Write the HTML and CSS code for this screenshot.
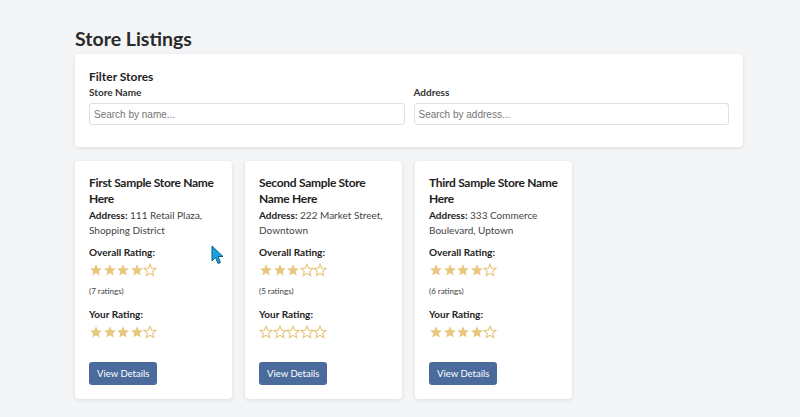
FILE: index.html
```html
<!DOCTYPE html>
<html lang="en">
<head>
<meta charset="utf-8">
<title>Store Listings</title>
<link rel="stylesheet" href="styles.css">
</head>
<body>
<svg class="defs" width="0" height="0" aria-hidden="true">
  <defs>
    <symbol id="star" viewBox="0 0 24 24"><path d="M12 2.2l2.95 6.6 7.2.7-5.45 4.85 1.6 7.05L12 17.7l-6.3 3.7 1.6-7.050L1.85 9.5l7.2-.7z"/></symbol>
  </defs>
</svg>
<div class="page">
  <h1 class="title">Store Listings</h1>
  <section class="filter">
    <h2 class="filter-title">Filter Stores</h2>
    <div class="filter-grid">
      <div class="field">
        <label class="label">Store Name</label>
        <input class="input" type="text" placeholder="Search by name...">
      </div>
      <div class="field">
        <label class="label">Address</label>
        <input class="input" type="text" placeholder="Search by address...">
      </div>
    </div>
  </section>
  <div class="cards">
    <article class="card">
      <h3 class="card-title">First Sample Store Name Here</h3>
      <p class="addr"><b>Address:</b> 111 Retail Plaza, Shopping District</p>
      <div class="rlabel">Overall Rating:</div>
      <div class="stars">
        <svg class="star full"><use href="#star"/></svg><svg class="star full"><use href="#star"/></svg><svg class="star full"><use href="#star"/></svg><svg class="star full"><use href="#star"/></svg><svg class="star empty"><use href="#star"/></svg>
      </div>
      <div class="count">(7 ratings)</div>
      <div class="rlabel">Your Rating:</div>
      <div class="stars">
        <svg class="star full"><use href="#star"/></svg><svg class="star full"><use href="#star"/></svg><svg class="star full"><use href="#star"/></svg><svg class="star full"><use href="#star"/></svg><svg class="star empty"><use href="#star"/></svg>
      </div>
      <button class="btn">View Details</button>
    </article>
    <article class="card">
      <h3 class="card-title">Second Sample Store Name Here</h3>
      <p class="addr"><b>Address:</b> 222 Market Street, Downtown</p>
      <div class="rlabel">Overall Rating:</div>
      <div class="stars">
        <svg class="star full"><use href="#star"/></svg><svg class="star full"><use href="#star"/></svg><svg class="star full"><use href="#star"/></svg><svg class="star empty"><use href="#star"/></svg><svg class="star empty"><use href="#star"/></svg>
      </div>
      <div class="count">(5 ratings)</div>
      <div class="rlabel">Your Rating:</div>
      <div class="stars">
        <svg class="star empty"><use href="#star"/></svg><svg class="star empty"><use href="#star"/></svg><svg class="star empty"><use href="#star"/></svg><svg class="star empty"><use href="#star"/></svg><svg class="star empty"><use href="#star"/></svg>
      </div>
      <button class="btn">View Details</button>
    </article>
    <article class="card">
      <h3 class="card-title">Third Sample Store Name Here</h3>
      <p class="addr"><b>Address:</b> 333 Commerce Boulevard, Uptown</p>
      <div class="rlabel">Overall Rating:</div>
      <div class="stars">
        <svg class="star full"><use href="#star"/></svg><svg class="star full"><use href="#star"/></svg><svg class="star full"><use href="#star"/></svg><svg class="star full"><use href="#star"/></svg><svg class="star empty"><use href="#star"/></svg>
      </div>
      <div class="count">(6 ratings)</div>
      <div class="rlabel">Your Rating:</div>
      <div class="stars">
        <svg class="star full"><use href="#star"/></svg><svg class="star full"><use href="#star"/></svg><svg class="star full"><use href="#star"/></svg><svg class="star full"><use href="#star"/></svg><svg class="star empty"><use href="#star"/></svg>
      </div>
      <button class="btn">View Details</button>
    </article>
  </div>
</div>
<svg class="cursor" width="14" height="20" viewBox="0 0 14 20"><path d="M1 1 L1 16 L4.5 12.5 L7 18.5 L9.5 17.5 L7 11.5 L12 11.5 Z" fill="#1aa3e0" stroke="#0b5f8a" stroke-width="1"/></svg>
</body>
</html>
```
FILE: styles.css
```css
html, body { margin: 0; padding: 0; }
body {
  background: #f4f5f6;
  font-family: Lato, "Open Sans", sans-serif;
  color: #212529;
  width: 800px;
  height: 417px;
  overflow: hidden;
  position: relative;
}
.defs { position: absolute; }
.page {
  width: 668px;
  margin: 0 0 0 75px;
  padding-top: 27px;
}
.title {
  margin: 0 0 3px 0;
  font-size: 19.5px;
  font-weight: 700;
  line-height: 24px;
  color: #2a2a2a;
}
.filter {
  background: #fff;
  border-radius: 4px;
  box-shadow: 0 1px 4px rgba(0,0,0,0.10);
  padding: 15px 14px 22px 14px;
}
.filter-title {
  margin: 0;
  font-size: 12px;
  font-weight: 700;
  line-height: 16px;
  color: #222;
}
.filter-grid {
  display: grid;
  grid-template-columns: 1fr 1fr;
  gap: 9px;
}
.field { display: flex; flex-direction: column; }
.label {
  font-size: 10px;
  font-weight: 700;
  line-height: 14px;
  color: #333;
  margin-bottom: 4px;
}
.input {
  box-sizing: border-box;
  height: 22px;
  border: 1px solid #dde0e3;
  border-radius: 3px;
  padding: 0 4px;
  font-family: "Liberation Sans", Arial, sans-serif;
  font-size: 10px;
  color: #333;
  background: #fff;
}
.input::placeholder { color: #757575; }
.cards {
  display: flex;
  gap: 13px;
  margin-top: 14px;
}
.card {
  width: 157px;
  height: 238px;
  box-sizing: border-box;
  background: #fff;
  border-radius: 4px;
  box-shadow: 0 1px 4px rgba(0,0,0,0.10);
  padding: 14px 14px 14px 14px;
  display: flex;
  flex-direction: column;
  align-items: flex-start;
}
.card-title {
  margin: 0 0 1px 0;
  font-size: 12px;
  font-weight: 700;
  line-height: 16px;
  letter-spacing: -0.3px;
  color: #222;
}
.addr {
  margin: 0;
  font-size: 10px;
  line-height: 15px;
  color: #444;
}
.addr b { color: #222; font-weight: 700; }
.rlabel {
  margin-top: 7px;
  font-size: 10px;
  font-weight: 700;
  line-height: 14px;
  color: #222;
}
.stars {
  display: flex;
  gap: 0;
  margin-top: 3px;
  height: 16px;
  align-items: center;
}
.star {
  width: 14px;
  height: 14px;
  margin-right: -0.4px;
}
.star.full { fill: #e8c77e; }
.star.empty { fill: #fff; stroke: #e8c77e; stroke-width: 2; }
.count {
  margin-top: 7px;
  font-size: 8px;
  line-height: 12px;
  color: #444;
  margin-bottom: 3px;
}
.btn {
  margin-top: auto;
  margin-bottom: 0;
  background: #4a6b9c;
  color: #fff;
  border: none;
  border-radius: 3px;
  font-family: Lato, "Open Sans", sans-serif;
  font-size: 9.5px;
  height: 23px;
  padding: 0 8px;
}
.cursor {
  position: absolute;
  left: 211px;
  top: 245px;
}
```
